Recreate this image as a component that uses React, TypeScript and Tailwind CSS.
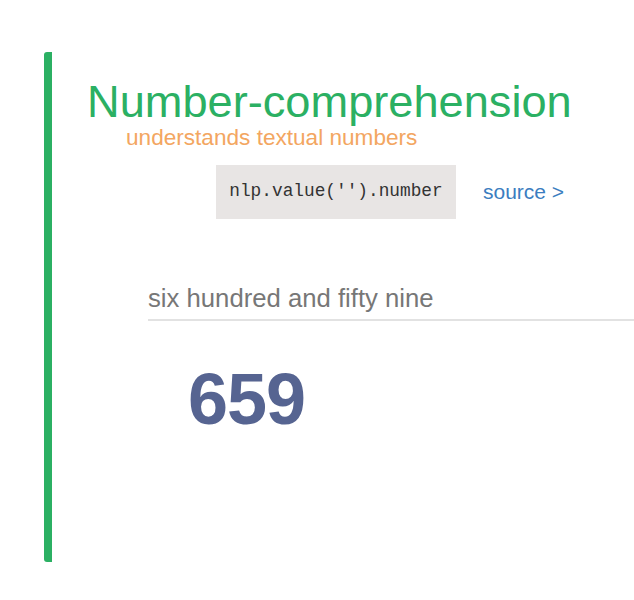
import { useState } from 'react';

const sans = "font-['Liberation_Sans',Arial,sans-serif]";

export default function App() {
  const [text, setText] = useState('six hundred and fifty nine');

  return (
    <div className={`h-[600px] w-[634px] overflow-hidden bg-white pt-[52px] pl-[44px] ${sans}`}>
      <div className="h-[510px] border-l-8 border-[#2bb063] rounded-l-[3px] flex flex-col">
        {/* Title */}
        <h1 className="ml-[35px] mt-[27px] text-[45.2px] leading-none font-normal text-[#2bb063] whitespace-nowrap">
          Number-comprehension
        </h1>
        <div className="ml-[74px] mt-[3px] text-[22.6px] leading-none text-[#f3a661] whitespace-nowrap">
          understands textual numbers
        </div>

        {/* Method + source */}
        <div className="ml-[164px] mt-[15px] flex items-center gap-[27px]">
          <code className="h-[54px] w-[240px] bg-[#e8e5e4] flex items-center justify-center font-['Liberation_Mono','Courier_New',monospace] text-[17.8px] text-[#333]">
            nlp.value('').number
          </code>
          <a href="#" className="text-[21px] leading-none text-[#3b7dc0] whitespace-nowrap">
            source &gt;
          </a>
        </div>

        {/* Input */}
        <div className="ml-[96px] mt-[60px] w-[520px] border-b-2 border-[#e2e2e2]">
          <input
            value={text}
            onChange={(e) => setText(e.target.value)}
            className="h-[40px] w-full bg-transparent outline-none text-[25.7px] text-[#777]"
          />
        </div>

        {/* Result */}
        <div className="ml-[136px] mt-[42px] text-[72px] leading-none font-bold tracking-[-1px] text-[#566491]">
          659
        </div>
      </div>
    </div>
  );
}
